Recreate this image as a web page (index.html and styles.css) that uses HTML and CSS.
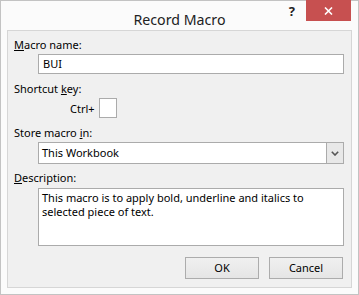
FILE: index.html
```html
<!DOCTYPE html>
<html>
<head>
<meta charset="utf-8">
<title>Record Macro</title>
<link rel="stylesheet" href="styles.css">
</head>
<body>
<div class="window">
  <div class="titlebar">
    <div class="tb-side"></div>
    <div class="title">Record Macro</div>
    <div class="tb-side tb-controls">
      <span class="help">?</span>
      <span class="close">
        <svg width="9" height="8" viewBox="0 0 9 8"><path d="M1 0.5 L8 7.5 M8 0.5 L1 7.5" stroke="#fff" stroke-width="1.6" fill="none"/></svg>
      </span>
    </div>
  </div>
  <div class="client">
    <div class="label lbl-first"><u>M</u>acro name:</div>
    <div class="field input">BUI</div>
    <div class="label">Shortcut <u>k</u>ey:</div>
    <div class="shortcut">
      <span class="ctrl">Ctrl+</span>
      <span class="keybox"></span>
    </div>
    <div class="label">Store macro <u>i</u>n:</div>
    <div class="field select">
      <span class="select-text">This Workbook</span>
      <span class="select-btn">
        <svg width="8" height="5" viewBox="0 0 8 5"><path d="M0.8 0.8 L4 4 L7.2 0.8" stroke="#555" stroke-width="1.6" fill="none"/></svg>
      </span>
    </div>
    <div class="label lbl-desc"><u>D</u>escription:</div>
    <div class="field textarea">This macro is to apply bold, underline and italics to<br>selected piece of text.</div>
    <div class="buttons">
      <div class="btn">OK</div>
      <div class="btn">Cancel</div>
    </div>
  </div>
</div>
</body>
</html>
```
FILE: styles.css
```css
* { box-sizing: border-box; }
html, body { margin: 0; padding: 0; }
body {
  width: 359px;
  height: 295px;
  font-family: "Noto Sans", "Open Sans", sans-serif;
  font-size: 11px;
  color: #000;
  background: #fff;
}
.window {
  width: 359px;
  height: 295px;
  border: 1px solid #c3c3c3;
  background: #fbfbfb;
  padding: 0 6px 6px 6px;
  display: flex;
  flex-direction: column;
}
.titlebar {
  height: 30px;
  margin-top: -1px;
  display: grid;
  grid-template-columns: 1fr auto 1fr;
  align-items: start;
}
.title {
  font-size: 14.2px;
  line-height: 20px;
  padding-top: 10px;
  color: #222;
}
.tb-controls {
  display: flex;
  justify-content: flex-end;
  align-items: flex-start;
  padding-right: 1px;
}
.help {
  font-weight: bold;
  font-size: 13px;
  line-height: 13px;
  margin-top: 5px;
  margin-right: 11px;
  color: #222;
}
.close {
  width: 45px;
  height: 21px;
  background: #c75050;
  display: flex;
  align-items: center;
  justify-content: center;
}
.client {
  flex: 1;
  border: 1px solid #d6d6d6;
  background: #f0f0f0;
  padding: 6px 7px 8px 6px;
  display: flex;
  flex-direction: column;
}
.label {
  line-height: 16px;
  height: 16px;
  margin-top: 7px;
  white-space: nowrap;
}
.lbl-first { margin-top: 0; }
.lbl-desc { margin-top: 6px; }
.field {
  margin-left: 24px;
  background: #fff;
  border: 1px solid #ababab;
}
.input {
  margin-top: 1px;
  height: 20px;
  line-height: 18px;
  padding-left: 4px;
}
.shortcut {
  margin-top: 1px;
  margin-left: 56px;
  display: flex;
  align-items: center;
  gap: 4px;
  height: 20px;
}
.keybox {
  width: 18px;
  height: 20px;
  background: #fff;
  border: 1px solid #ababab;
}
.select {
  margin-top: 1px;
  height: 22px;
  display: flex;
  align-items: stretch;
}
.select-text {
  flex: 1;
  line-height: 20px;
  padding-left: 3px;
}
.select-btn {
  width: 17px;
  background: #e8e8e8;
  border-left: 1px solid #ababab;
  display: flex;
  align-items: center;
  justify-content: center;
}
.textarea {
  margin-top: 2px;
  height: 58px;
  padding: 2px 3px;
  line-height: 14px;
  white-space: nowrap;
}
.buttons {
  margin-top: 11px;
  display: flex;
  justify-content: flex-end;
  gap: 10px;
  padding-right: 1px;
}
.btn {
  width: 74px;
  height: 22px;
  border: 1px solid #acacac;
  background: linear-gradient(#f0f0f0, #e5e5e5);
  text-align: center;
  line-height: 20px;
}
```
